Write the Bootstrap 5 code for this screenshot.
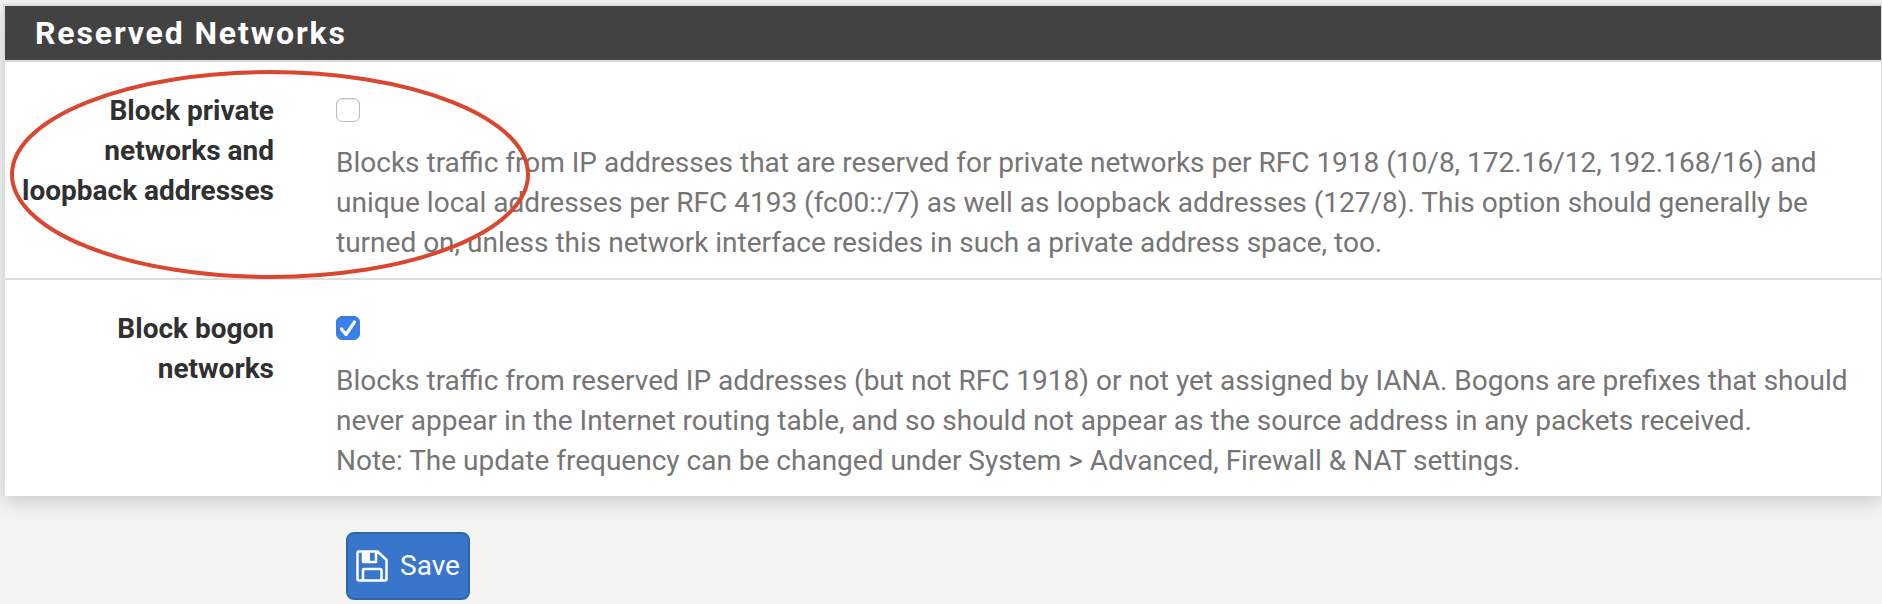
<!DOCTYPE html>
<html lang="en">
<head>
<meta charset="utf-8">
<title>Reserved Networks</title>
<link href="https://cdn.jsdelivr.net/npm/bootstrap@5.3.0/dist/css/bootstrap.min.css" rel="stylesheet">
<style>
body{background:#f4f4f4;font-family:Roboto,"Liberation Sans",sans-serif;font-size:28px;line-height:40px;color:#303030;overflow:hidden}
.panel{margin:4px -1px 0 3px;border:2px solid #dcdcdc;border-bottom:0;border-radius:0;box-shadow:0 6px 18px rgba(0,0,0,.17);color:inherit}
.panel .panel-title{height:56px;padding:2px 0 2px 30px;background:#424242;color:#fff;border-bottom:2px solid #dcdcdc;border-radius:0;font-size:32px;letter-spacing:1.85px;line-height:50px;font-weight:700}
.panel .setting{padding:29px 0 0;height:216px}
.panel .setting + .setting{border-top:2px solid #dcdcdc;height:218px}
.setting-label{width:269px;font-weight:700;text-align:right}
.setting-body{margin-left:62px;color:#757575;white-space:nowrap}
.form-check-input.box{display:block;width:24px;height:24px;margin:7px 0 21px;border:1px solid #bdbdbd;border-radius:6px;background-color:#fff;box-shadow:inset 0 1px 2px rgba(0,0,0,.1)}
.form-check-input.box:checked{background-color:#3b80ea;border-color:#3b80ea;background-size:24px;background-image:url("data:image/svg+xml,%3Csvg xmlns='http://www.w3.org/2000/svg' viewBox='0 0 24 24'%3E%3Cpath d='M5.500 13l4.500 5.500L18.500 6' fill='none' stroke='white' stroke-width='3.2' stroke-linecap='round' stroke-linejoin='round'/%3E%3C/svg%3E")}
.btn-save{margin:36px 0 0 346px;width:124px;height:68px;padding:0 0 0 8px;background:#3876cc;border:2px solid #2d69a8;border-radius:8px;color:#fff;font-size:28px;line-height:40px}
.callout{left:5px;top:64px;overflow:visible;pointer-events:none}
</style>
</head>
<body>
<main class="position-relative d-flex flex-column">
  <section class="card panel">
    <h2 class="card-header panel-title m-0">Reserved Networks</h2>
    <div class="setting d-flex">
      <label class="setting-label flex-shrink-0" for="priv">Block private<br>networks and<br>loopback addresses</label>
      <div class="setting-body">
        <input class="form-check-input box" type="checkbox" id="priv">
        Blocks traffic from IP addresses that are reserved for private networks per RFC 1918 (10/8, 172.16/12, 192.168/16) and<br>unique local addresses per RFC 4193 (fc00::/7) as well as loopback addresses (127/8). This option should generally be<br>turned on, unless this network interface resides in such a private address space, too.
      </div>
    </div>
    <div class="setting d-flex">
      <label class="setting-label flex-shrink-0" for="bogon">Block bogon<br>networks</label>
      <div class="setting-body">
        <input class="form-check-input box" type="checkbox" id="bogon" checked>
        Blocks traffic from reserved IP addresses (but not RFC 1918) or not yet assigned by IANA. Bogons are prefixes that should<br>never appear in the Internet routing table, and so should not appear as the source address in any packets received.<br>Note: The update frequency can be changed under System &gt; Advanced, Firewall &amp; NAT settings.
      </div>
    </div>
  </section>
  <button class="btn btn-save d-flex align-items-center" type="button">
    <svg width="32" height="32" viewBox="0 0 32 32" fill="none" stroke="#fff" stroke-width="2.5" stroke-linejoin="round" aria-hidden="true"><path d="M3 1.500H21.500L30.500 10V29Q30.500 30.500 29 30.500H3Q1.500 30.500 1.500 29V3Q1.500 1.500 3 1.500ZM7 30V20.500Q7 19 8.500 19H24Q25.500 19 25.500 20.500V30M7 2V12H20V2"/><path fill="#fff" stroke="none" d="M6 2H14V13H6Z"/></svg>
    <span class="ms-2 ps-1">Save</span>
  </button>
  <svg class="callout position-absolute" width="530" height="220" aria-hidden="true"><ellipse cx="265" cy="110.500" rx="258" ry="102.500" fill="none" stroke="#d9472f" stroke-width="4"/></svg>
</main>
<script src="https://cdn.jsdelivr.net/npm/bootstrap@5.3.0/dist/js/bootstrap.bundle.min.js"></script>
</body>
</html>
